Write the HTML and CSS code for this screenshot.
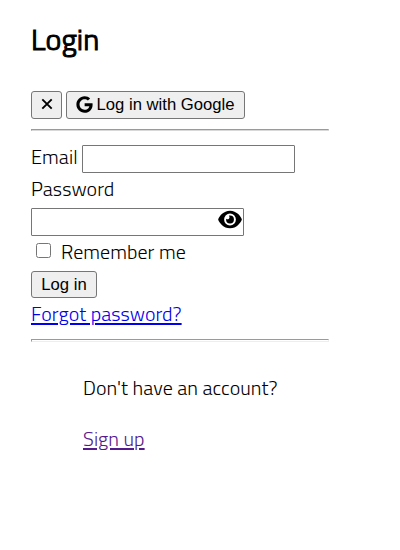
FILE: index.html
```html
<!DOCTYPE html>
<html lang="en">
<head>
<meta charset="utf-8">
<title>Login</title>
<link rel="stylesheet" href="styles.css">
</head>
<body>
<main class="login">
  <h1 class="title">Login</h1>
  <div class="providers">
    <button class="button close" type="button" aria-label="Close"><svg class="cross" viewBox="0 0 12 12"><path d="M1.3 1.3 10.700 10.700M10.700 1.300 1.300 10.700" fill="none" stroke="#000" stroke-width="1.900"/></svg></button>
    <button class="button google" type="button"><svg class="g-logo" viewBox="0 0 488 512"><path d="M488 261.800C488 403.300 391.100 504 248 504 110.800 504 0 393.200 0 256S110.800 8 248 8c66.800 0 123 24.500 166.300 64.900l-67.500 64.900C258.500 52.600 94.300 116.600 94.300 256c0 86.500 69.100 156.600 153.700 156.600 98.200 0 135-70.400 140.800-106.900H248v-85.300h236.100c2.300 12.700 3.900 24.900 3.900 41.400z"/></svg><span>Log in with Google</span></button>
  </div>
  <hr class="rule">
  <form class="form">
    <div class="email-row"><label class="text email-label" for="email">Email</label><input class="field" id="email" type="email"></div>
    <label class="text password-label" for="password">Password</label>
    <div class="password-box">
      <input class="field" id="password" type="password">
      <svg class="eye" viewBox="0 0 576 512"><path fill-rule="evenodd" d="M288 42c-80.800 0-145.500 34-192.600 76C48.600 160 17.300 208 2.500 243.700c-3.300 7.900-3.300 16.700 0 24.600C17.300 304 48.600 352 95.400 394 142.500 436 207.200 470 288 470s145.500-34 192.600-76c46.800-42 78.100-90 93-125.700 3.300-7.900 3.300-16.700 0-24.600-14.900-35.700-46.200-83.700-93-125.700C433.500 76 368.800 42 288 42zM144 256a144 144 0 1 0 288 0 144 144 0 1 0-288 0z"/><path d="M288 160a96 96 0 1 1-96 96c0-6 1-12 2-17 9 9 20 13 32 13 28 0 50-22 50-50 0-15-5-29-15-38 9-3 18-4 27-4z"/></svg>
    </div>
    <div class="remember"><input class="check" id="remember" type="checkbox"><label class="text remember-label" for="remember">Remember me</label></div>
    <button class="button submit" type="button">Log in</button>
    <div class="forgot"><a class="text link forgot-link" href="#">Forgot password?</a></div>
  </form>
  <hr class="rule">
  <section class="signup">
    <p class="text question">Don't have an account?</p>
    <a class="text link visited" href="#">Sign up</a>
  </section>
</main>
</body>
</html>
```
FILE: styles.css
```css
* { box-sizing: border-box; }
body { margin: 0; background: #fff; color: #000; }
.login { width: 298px; margin-left: 31px; padding-top: 19px; font-family: "Titillium Web", "Open Sans", sans-serif; font-size: 20px; font-weight: 300; line-height: 30px; }
.title { margin: 0 0 32px; font-size: 30px; line-height: 40px; font-weight: 300; letter-spacing: 0.2px; -webkit-text-stroke: 1.1px #000; }
.text { white-space: nowrap; letter-spacing: 0.06px; }
.providers { display: flex; gap: 4px; height: 28px; }
.button { display: flex; align-items: center; justify-content: center; height: 28px; margin: 0; padding: 0; border: 1px solid #767676; border-radius: 3px; background: #efefef; color: #000; font: 400 16.667px/20px "Liberation Sans", sans-serif; white-space: nowrap; }
.close { width: 31px; }
.cross { width: 12px; height: 12px; margin-top: -2px; }
.google { width: 179px; gap: 4px; }
.g-logo { width: 17px; height: 17px; margin: -2px 0 0 -1px; }
.rule { height: 2px; margin: 10px 0 14px; border: 1px solid; border-color: #9a9a9a #d8d8d8 #d8d8d8 #9a9a9a; }
.email-row { display: flex; justify-content: space-between; width: 264px; height: 28px; }
.email-label { line-height: 24px; }
.field { display: block; width: 213px; height: 28px; margin: 0; padding: 1px 2px; border: 1px solid #767676; border-radius: 1px; background: #fff; }
.password-label { display: block; height: 35px; line-height: 32px; }
.password-box { position: relative; width: 213px; height: 28px; }
.eye { position: absolute; right: 2px; top: 1px; width: 24px; height: 21px; }
.remember { display: flex; align-items: center; height: 35px; }
.check { width: 15px; height: 15px; margin: 0 10px 6px 5px; }
.remember-label { line-height: 31px; height: 35px; }
.submit { width: 66px; height: 27px; }
.forgot { height: 41px; line-height: 31px; }
.link { color: #00e; text-decoration: underline; text-decoration-thickness: 2px; text-underline-offset: 2px; }
.form + .rule { height: 3px; margin: 0; border-color: #9a9a9a #eee #eee #9a9a9a; }
.signup { padding: 31px 0 0 52px; }
.question { margin: 0 0 21px; }
.visited { color: #551a8b; }
```
